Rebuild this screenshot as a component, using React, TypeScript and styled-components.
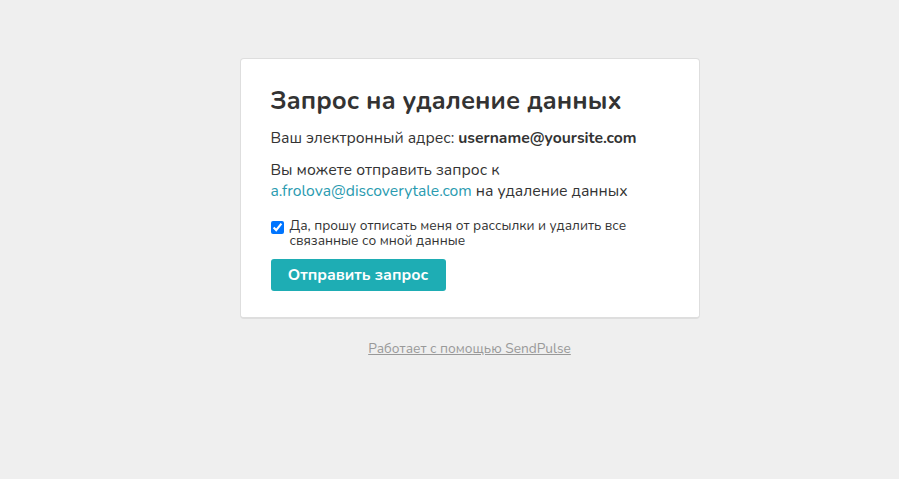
import styled, { createGlobalStyle } from 'styled-components';

const GlobalStyle = createGlobalStyle`
  html, body {
    margin: 0;
    padding: 0;
    background: #efefef;
  }
  body {
    font-family: "Nunito", "Noto Sans", "Open Sans", sans-serif;
    color: #333;
  }
`;

const Page = styled.div`
  display: flex;
  flex-direction: column;
  align-items: center;
  padding: 58px 0 0 40px;
  min-height: 479px;
  box-sizing: border-box;
`;

const Card = styled.div`
  width: 460px;
  box-sizing: border-box;
  background: #fff;
  border: 1px solid #dedede;
  border-bottom-width: 2px;
  border-radius: 4px;
  padding: 25px 30px 26px 30px;
`;

const Title = styled.h1`
  margin: 0 0 10px;
  font-size: 25.4px;
  font-weight: 700;
  line-height: 34px;
  color: #333;
`;

const Text = styled.p<{ gap?: number }>`
  margin: 0 0 ${(p) => p.gap ?? 12}px;
  font-size: 15.7px;
  line-height: 21px;
  color: #333;

  b {
    font-weight: 700;
  }
`;

const Link = styled.a`
  color: #2a9bb0;
  text-decoration: none;
`;

const CheckRow = styled.label`
  display: flex;
  align-items: flex-start;
  gap: 6px;
  margin: 0 0 11px;
  font-size: 13.7px;
  line-height: 15px;
  color: #333;
`;

const Check = styled.input`
  width: 13px;
  height: 13px;
  margin: 3px 0 0 0;
  accent-color: #0075ff;
  flex-shrink: 0;
`;

const Button = styled.button`
  display: inline-flex;
  align-items: center;
  justify-content: center;
  width: 175px;
  height: 32px;
  border: none;
  border-radius: 3px;
  background: #1eadb4;
  color: #fff;
  font-family: inherit;
  font-size: 15.8px;
  font-weight: 700;
  cursor: pointer;
`;

const Footer = styled.a`
  margin-top: 21px;
  font-size: 13.7px;
  line-height: 18px;
  color: #999;
  text-decoration: underline;
`;

export default function App() {
  return (
    <>
      <GlobalStyle />
      <Page>
        <Card>
          <Title>Запрос на удаление данных</Title>
          <Text gap={11}>
            Ваш электронный адрес: <b>username@yoursite.com</b>
          </Text>
          <Text gap={16}>
            Вы можете отправить запрос к
            <br />
            <Link href="#">a.frolova@discoverytale.com</Link> на удаление данных
          </Text>
          <CheckRow>
            <Check type="checkbox" defaultChecked />
            <span>Да, прошу отписать меня от рассылки и удалить все связанные со мной данные</span>
          </CheckRow>
          <Button>Отправить запрос</Button>
        </Card>
        <Footer href="#">Работает с помощью SendPulse</Footer>
      </Page>
    </>
  );
}
